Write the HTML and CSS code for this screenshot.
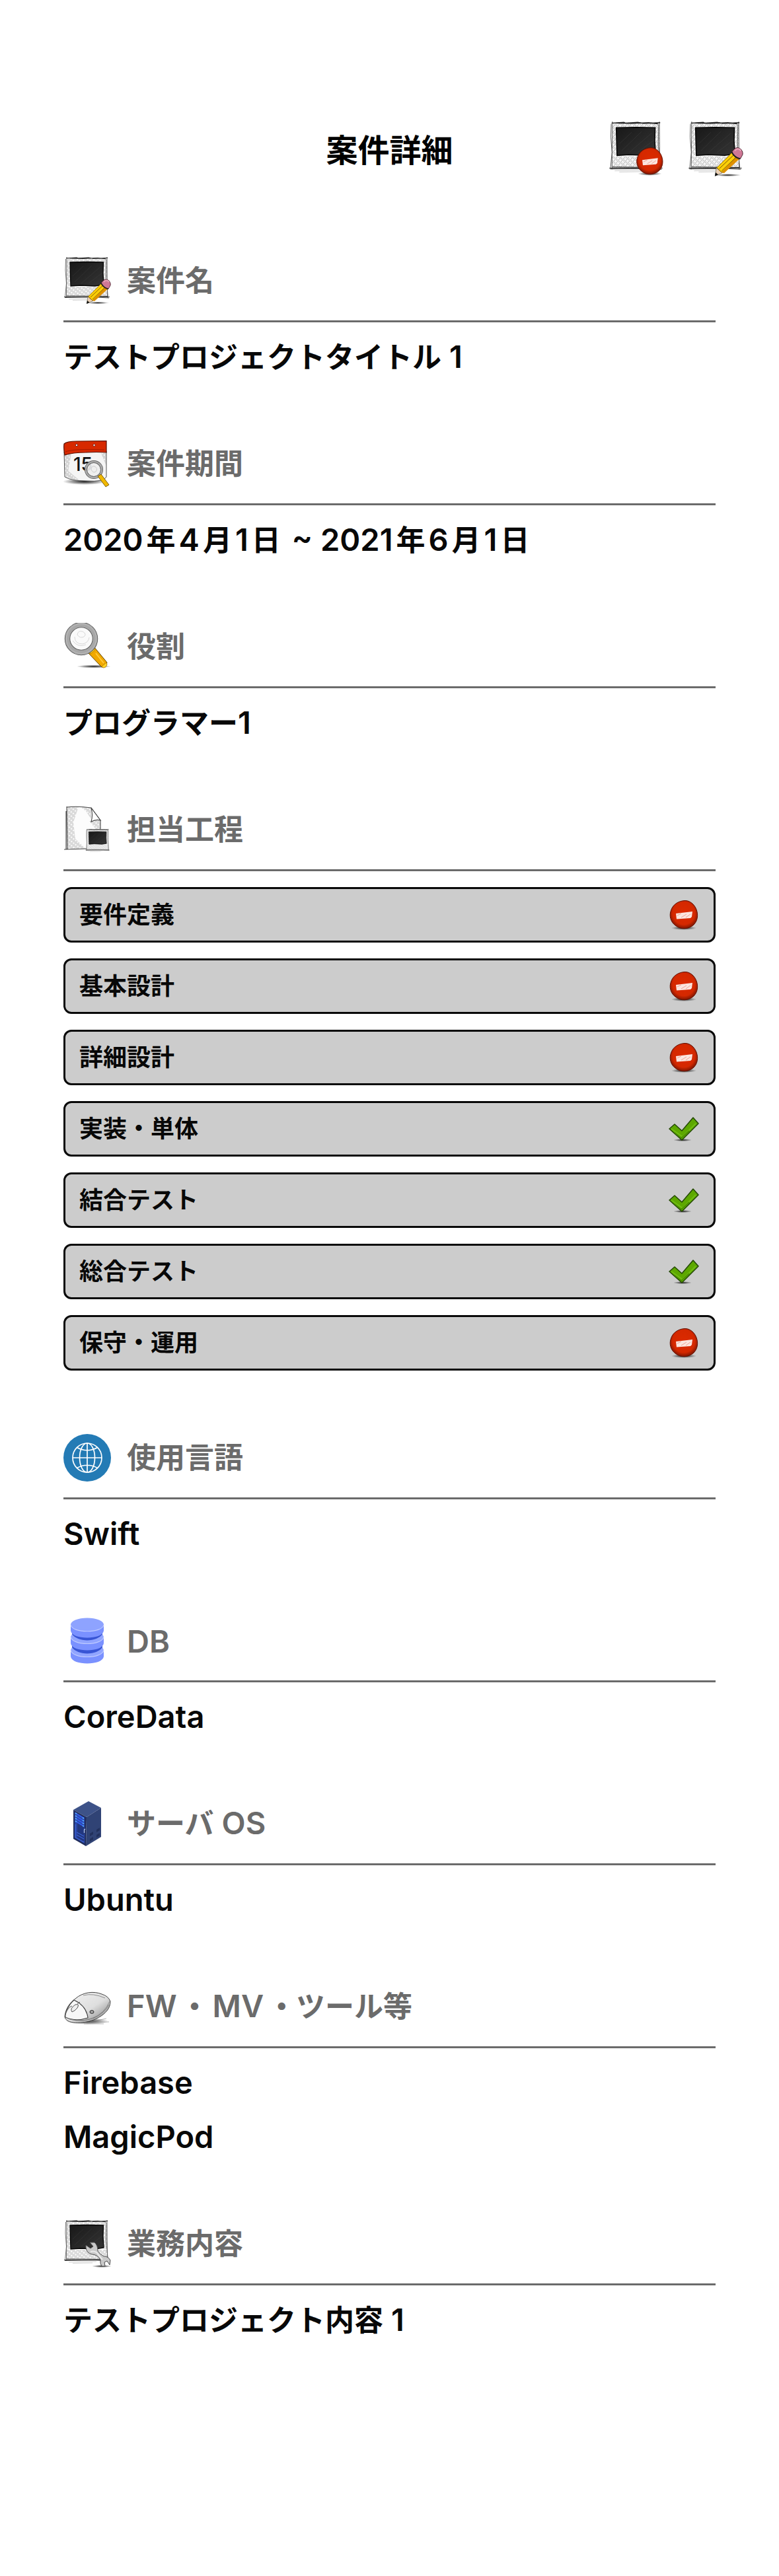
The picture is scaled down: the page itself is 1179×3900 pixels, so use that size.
FILE: index.html
```
<!DOCTYPE html>
<html lang="ja">
<head>
<meta charset="utf-8">
<meta name="viewport" content="width=device-width, initial-scale=1">
<title>案件詳細</title>
<link rel="stylesheet" href="styles.css">
</head>
<body>
<svg class="sprite" aria-hidden="true">
  <defs>
    <linearGradient id="g-screen" x1="0" y1="0" x2="1" y2="1"><stop offset="0" stop-color="#181818"/><stop offset="1" stop-color="#353535"/></linearGradient>
    <radialGradient id="g-red" cx=".5" cy=".45" r=".58"><stop offset="0" stop-color="#dc2a00"/><stop offset=".7" stop-color="#d42800"/><stop offset="1" stop-color="#6e1200"/></radialGradient>
    <radialGradient id="g-shadow"><stop offset="0" stop-color="#000" stop-opacity=".9"/><stop offset="1" stop-color="#000" stop-opacity="0"/></radialGradient>
    <linearGradient id="g-mouse" x1="0" y1="0" x2="1" y2="1"><stop offset="0" stop-color="#f4f4f4"/><stop offset=".55" stop-color="#dedede"/><stop offset="1" stop-color="#777"/></linearGradient>
    <pattern id="p-hatch" width="4" height="5" patternUnits="userSpaceOnUse" patternTransform="rotate(38)"><path d="M1 0V5M3 1V4" stroke="#666" stroke-width=".6" opacity=".8"/></pattern>
  </defs>
  <symbol id="polaroid" viewBox="0 0 72 72">
    <path d="M5 1L66 1L67 61L4 61Z" fill="#fff"/>
    <path d="M5 1H66V7H10V44H5ZM5 45H67V61H4ZM61 7H66V44H61Z" fill="url(#p-hatch)"/>
    <path d="M5 0L4.500 62M3.500 3L3 20L4.500 40L2.500 61M66 0L66.500 62M65 4L64.500 30L67.500 61" fill="none" stroke="#555" stroke-width=".8"/>
    <path d="M4 2L20 1L22 2L38 1L45 2.500L67 1.500M10 2L29 2.500L52 1.500L64 3" fill="none" stroke="#222" stroke-width="1.200"/>
    <path d="M1 60.500L30 60L70 60.500M2 61.500L50 61L69 62M5 59L67 59.500" fill="none" stroke="#333" stroke-width=".9"/>
    <path d="M8 64L50 63M14 65.500L44 65" stroke="#aaa" stroke-width=".5"/>
    <path d="M10 8L36 7.500L60.500 8L60 25L61 42L48 44L26 43L11 44L10.500 28Z" fill="url(#g-screen)" stroke="#050505" stroke-width="1.300"/>
    <path d="M17 38L43 13M27 40L56 15M38 40L59 24M14 29L30 14" stroke="#4a4a4a" stroke-width=".5" opacity=".6"/>
  </symbol>
  <symbol id="pencil" viewBox="0 0 72 72">
    <ellipse cx="52" cy="69.500" rx="17" ry="1.700" fill="url(#g-shadow)"/>
    <path d="M37 60L35.500 70.500L45 66.500Z" fill="#ead0b5" stroke="#554" stroke-width=".6"/>
    <path d="M36 66L35 71L39.500 69Z" fill="#111"/>
    <path d="M37.500 60L58 40L68 47L46.500 66.500L42 65Z" fill="#d88e00"/>
    <path d="M37.500 60L58 39.500L66 45L44 66L41 63Z" fill="#ffcf08" stroke="#5a4300" stroke-width=".6"/>
    <path d="M64 44L68 47.500L47 67L44 66Z" fill="#df9100"/>
    <path d="M41 61L61 42M44 64L64 45" stroke="#6d5000" stroke-width=".8"/>
    <path d="M57 39.500L60 36Q64 32 69 36Q73 41 70 45L68 48.500Q59 46 57 39.500Z" fill="#cf7896" stroke="#3c1722" stroke-width=".8"/>
    <path d="M57 39.500Q60 46.500 68 48.500" fill="none" stroke="#222" stroke-width="1.800"/>
    <path d="M61 38Q65 33 69 38" fill="none" stroke="#e6a3b8" stroke-width="2"/>
  </symbol>
  <symbol id="minus" viewBox="0 0 48 48">
    <ellipse cx="24" cy="44" rx="19" ry="3" fill="url(#g-shadow)"/>
    <path d="M25 2.500C33 2 40 8 43 16C46 24 45 33 39 39C32 46 19 47 11 40C4 35 1 25 5 16C8 8 16 3 25 2.500Z" fill="url(#g-red)" stroke="#641000" stroke-width="1"/>
    <path d="M12 22L37 19L36 27L34 29L13 30.500Z" fill="#fbe5df"/>
    <path d="M14 25L20 22M20 28L28 23M27 28L34 23" stroke="#e98672" stroke-width=".7"/>
  </symbol>
  <symbol id="check" viewBox="0 0 48 48">
    <ellipse cx="22" cy="41" rx="14" ry="2" fill="url(#g-shadow)"/>
    <path d="M2 24L10 17L21 27L38 7L46 16L21 41Z" fill="#5da800" stroke="#234800" stroke-width="1.500" stroke-linejoin="round"/>
    <path d="M5 24L22 36L42 16" fill="none" stroke="#70bc10" stroke-width="2"/>
    <path d="M10 30L20 38L32 27" fill="none" stroke="#478800" stroke-width="1.500"/>
  </symbol>
  <symbol id="polaroid-pencil" viewBox="0 0 72 72"><use href="#polaroid"/><use href="#pencil"/></symbol>
  <symbol id="polaroid-minus" viewBox="0 0 72 72"><use href="#polaroid"/><use href="#minus" x="34" y="32" width="39" height="39"/></symbol>
  <symbol id="magnifier" viewBox="0 0 72 72">
    <ellipse cx="46" cy="66" rx="26" ry="2.500" fill="url(#g-shadow)"/>
    <path d="M37 45L46 36L66 60Q65 67 58 67Z" fill="#f1a900" stroke="#604300" stroke-width="1"/>
    <path d="M39 43L45 38L48 41L41 47ZM58 66L65 60L66 63Q65 68 60 68Z" fill="#ffd222" stroke="#a46b00" stroke-width=".7"/>
    <path d="M49 46L61 61" stroke="#ffc83a" stroke-width="2"/>
    <circle cx="27" cy="24" r="21" fill="#fafafa" stroke="#555" stroke-width="8.500"/>
    <circle cx="27" cy="24" r="21" fill="none" stroke="#a7a7a7" stroke-width="6.800"/>
    <circle cx="27" cy="24" r="22.500" fill="none" stroke="#bdbdbd" stroke-width="1"/>
    <path d="M21 18Q22 11 29 13Q36 17 31 21Q25 24 21 18ZM17 21Q17 32 29 32Q38 30 39 22M14 27Q22 38 34 33" fill="none" stroke="#d8d8d8" stroke-width="1"/>
  </symbol>
  <symbol id="document" viewBox="0 0 72 72">
    <path d="M5 2Q24 0 42 3L56 22V66L5 65Z" fill="#fcfcfc"/>
    <path d="M5 2L23 1L15 25L18 50L34 65H5ZM25 1L42 3V20L34 8ZM39 23H56V35H49Z" fill="url(#p-hatch)"/>
    <path d="M5 1L6 66M4 8L4 66M1 66L35 65M5 2Q22 0 42 3L56 22V37" fill="none" stroke="#444" stroke-width="1.100"/>
    <path d="M42 3Q45 14 42 24Q49 20 56 22Z" fill="#fff" stroke="#444" stroke-width="1.100"/>
    <use href="#polaroid" x="33" y="35" width="38" height="38"/>
  </symbol>
  <symbol id="globe" viewBox="0 0 72 72">
    <circle cx="36" cy="36" r="36" fill="#247bb5"/>
    <g fill="none" stroke="#fff" stroke-width="1.700"><circle cx="36" cy="36" r="22"/><ellipse cx="36" cy="36" rx="11.500" ry="22"/><path d="M14 36H58M36 14V58M20.500 20.500Q36 29 51.500 20.500M20.500 51.500Q36 43 51.500 51.500"/></g>
  </symbol>
  <symbol id="database" viewBox="0 0 72 72">
    <path d="M13 23H59V52Q52 57 36 57Q20 57 13 52Z" fill="#3855d5"/>
    <g id="disk"><path d="M11 51V60C13 74 59 74 61 60V51Z" fill="#7a91ff"/><path d="M11 50C13 64 59 64 61 50L59 46C51 58 21 58 13 46Z" fill="#91a5ff"/><path d="M11 50C13 64 59 64 61 50" fill="none" stroke="#c0cbff" stroke-width="1.200"/></g>
    <path d="M13 41V45C21 59 51 59 59 45V41Z" fill="#3855d5"/>
    <use href="#disk" y="-20"/>
    <path d="M13 21V25C21 39 51 39 59 25V21Z" fill="#3855d5"/>
    <path d="M11 12V21C13 35 59 35 61 21V12Z" fill="#7a91ff"/><ellipse cx="36" cy="11.500" rx="25" ry="10" fill="#8ea3ff"/><path d="M11 12C13 25 59 25 61 12" fill="none" stroke="#c0cbff" stroke-width="1.200"/>
  </symbol>
  <symbol id="server" viewBox="0 0 72 72">
    <path d="M15 15L38 2L57 12L35 26Z" fill="#3d5288"/><path d="M35 26L57 12V56L34 70Z" fill="#304375"/><path d="M15 15L35 26L34 70L15 59Z" fill="#202d5d"/>
    <path d="M17 18L32 27V66L17 57Z" fill="#2b47a5"/><path d="M21 35L31 41V63L21 57Z" fill="#22377f"/>
    <path d="M18 20L31 28M18 24L31 32M18 28L31 36M18 32L31 40" stroke="#335dec" stroke-width="1.800"/>
    <path d="M18 20L20 21M18 24L20 25M18 28L20 29M18 32L20 33M29 27L31 28M29 31L31 32M29 35L31 36M29 39L31 40" stroke="#5cb4ff" stroke-width="1.500"/>
    <path d="M18 37V57L31 64M20 53L31 59M20 49L31 55" fill="none" stroke="#3d63d5" stroke-width="1.200"/>
    <path d="M33 44L31.500 45V50" fill="none" stroke="#bed4fa" stroke-width="1.200"/>
    <path d="M40 51L45 48V52L40 55ZM50 45L55 42V46L50 49ZM40 59L45 56V60L40 63ZM50 53L55 50V54L50 57Z" fill="#22315c"/>
  </symbol>
  <symbol id="mouse" viewBox="0 0 72 72">
    <ellipse cx="36" cy="58" rx="32" ry="5" fill="url(#g-shadow)"/>
    <path d="M2 51C3 39 10 30 18 24C29 14 46 12 58 17Q68 20 71 28C71 41 60 50 46 56C30 62 3 63 2 51Z" fill="url(#g-mouse)" stroke="#444" stroke-width="1"/>
    <path d="M16 26C6 35 2 47 3 52Q18 59 37 53Q35 35 16 26Z" fill="#f7f7f7" stroke="#444" stroke-width="1.200"/>
    <path d="M3 52Q20 61 43 54Q62 47 70 28M9 55Q29 61 48 52M45 54Q63 45 69 33M30 19Q45 15 63 23" fill="none" stroke="#777" stroke-width=".8"/>
    <path d="M13 44Q9 39 18 33Q25 31 21 38Q17 43 13 44ZM3 48Q6 37 13 35M21 32L25 29" fill="#eee" stroke="#555" stroke-width="1"/>
    <ellipse cx="43" cy="44" rx="3" ry="2.300" fill="#aaa" stroke="#222" stroke-width="1"/>
    <path d="M40 59L65 54M35 61L69 59M31 62L61 62" stroke="#888" stroke-width=".6"/>
  </symbol>
  <symbol id="polaroid-wrench" viewBox="0 0 72 72">
    <use href="#polaroid"/>
    <ellipse cx="58" cy="70" rx="15" ry="2" fill="url(#g-shadow)"/>
    <path d="M40 34L47 34Q52 38 52 47Q54 51 61 55Q68 55 71 61L70 68L66 62L62 64L63 70L58 70Q55 66 56 60Q51 52 43 52Q35 50 34 42L34 38L41 43L45 40Z" fill="#c9c9c9" stroke="#4d4d4d" stroke-width="1"/>
    <path d="M41 48Q50 46 53 53L59 60" fill="none" stroke="#e9e9e9" stroke-width="2"/>
  </symbol>
</svg>

<header class="topbar">
  <h1 class="topbar-title">案件詳細</h1>
  <div class="topbar-actions">
    <button class="icon-button" type="button" aria-label="削除"><svg class="icon-action"><use href="#polaroid-minus"/></svg></button>
    <button class="icon-button" type="button" aria-label="編集"><svg class="icon-action"><use href="#polaroid-pencil"/></svg></button>
  </div>
</header>

<main class="details">
  <section class="section">
    <h2 class="section-title"><svg class="icon"><use href="#polaroid-pencil"/></svg>案件名</h2>
    <p class="value mixed">テストプロジェクトタイトル<span class="latin">1</span></p>
  </section>
  <section class="section">
    <h2 class="section-title">
      <svg class="icon" viewBox="0 0 72 72" aria-hidden="true">
        <ellipse cx="32" cy="63" rx="33" ry="5" fill="url(#g-shadow)"/>
        <path d="M1 18L65 17L65 56Q62 64 34 62Q12 62 2 56Z" fill="#f5f5f5" stroke="#555" stroke-width="1"/>
        <path d="M1 20L12 20L6 54L2 56ZM5 45L24 61L4 57ZM57 20L65 20V40Z" fill="url(#p-hatch)"/>
        <path d="M1 6Q5 2 20 2L65 1.500L65 19Q50 18 34 19Q14 19 2 23Q0 13 1 6Z" fill="#d72900" stroke="#551000" stroke-width="1.200"/>
        <path d="M3 18Q16 13 62 15" fill="none" stroke="#a51b00" stroke-width="1"/>
        <circle cx="20" cy="8" r="1.700" fill="#eee" stroke="#500" stroke-width=".7"/><circle cx="46.500" cy="8" r="1.700" fill="#eee" stroke="#500" stroke-width=".7"/>
        <text class="calendar-day" x="15" y="47">15</text>
        <circle cx="46" cy="45" r="12" fill="#eee" fill-opacity=".92" stroke="#555" stroke-width="4"/>
        <circle cx="46" cy="45" r="12" fill="none" stroke="#aaa" stroke-width="2.600"/>
        <path d="M42 45Q42 39 47 40Q53 43 49 48Q45 51 42 45Z" fill="none" stroke="#ccc" stroke-width="1"/>
        <path d="M52 55L57 52L69 68L64 71Z" fill="#f0b800" stroke="#614600" stroke-width=".8"/>
      </svg>案件期間</h2>
    <p class="value mixed-date"><span class="latin">2020</span>年<span class="latin">4</span>月<span class="latin">1</span>日<span class="latin"> ~ 2021</span>年<span class="latin">6</span>月<span class="latin">1</span>日</p>
  </section>
  <section class="section">
    <h2 class="section-title"><svg class="icon"><use href="#magnifier"/></svg>役割</h2>
    <p class="value">プログラマー<span class="latin">1</span></p>
  </section>
  <section class="section">
    <h2 class="section-title"><svg class="icon"><use href="#document"/></svg>担当工程</h2>
    <ul class="phases">
      <li class="phase">要件定義<svg class="icon-state" role="img" aria-label="対象外"><use href="#minus"/></svg></li>
      <li class="phase">基本設計<svg class="icon-state" role="img" aria-label="対象外"><use href="#minus"/></svg></li>
      <li class="phase">詳細設計<svg class="icon-state" role="img" aria-label="対象外"><use href="#minus"/></svg></li>
      <li class="phase">実装・単体<svg class="icon-state" role="img" aria-label="担当"><use href="#check"/></svg></li>
      <li class="phase">結合テスト<svg class="icon-state" role="img" aria-label="担当"><use href="#check"/></svg></li>
      <li class="phase">総合テスト<svg class="icon-state" role="img" aria-label="担当"><use href="#check"/></svg></li>
      <li class="phase">保守・運用<svg class="icon-state" role="img" aria-label="対象外"><use href="#minus"/></svg></li>
    </ul>
  </section>
  <section class="section">
    <h2 class="section-title"><svg class="icon"><use href="#globe"/></svg>使用言語</h2>
    <p class="value"><span class="latin">Swift</span></p>
  </section>
  <section class="section">
    <h2 class="section-title"><svg class="icon"><use href="#database"/></svg><span class="latin">DB</span></h2>
    <p class="value"><span class="latin">CoreData</span></p>
  </section>
  <section class="section">
    <h2 class="section-title"><svg class="icon"><use href="#server"/></svg><span class="mixed">サーバ<span class="latin">OS</span></span></h2>
    <p class="value"><span class="latin">Ubuntu</span></p>
  </section>
  <section class="section">
    <h2 class="section-title"><svg class="icon"><use href="#mouse"/></svg><span class="mixed-date"><span class="latin">FW</span>・<span class="latin">MV</span>・ツール等</span></h2>
    <p class="value"><span class="latin">Firebase</span></p>
    <p class="value"><span class="latin">MagicPod</span></p>
  </section>
  <section class="section">
    <h2 class="section-title"><svg class="icon"><use href="#polaroid-wrench"/></svg>業務内容</h2>
    <p class="value mixed">テストプロジェクト内容<span class="latin">1</span></p>
  </section>
</main>
</body>
</html>
```
FILE: styles.css
```
* { box-sizing: border-box; }

body {
  margin: 0;
  background: #fff;
  color: #080808;
  font-family: Inter, "Noto Sans CJK JP", sans-serif;
  font-size: 44px;
  font-weight: 600;
  line-height: 58px;
}

h1, h2, p, ul { margin: 0; padding: 0; font-size: inherit; font-weight: inherit; }

.sprite { position: absolute; width: 0; height: 0; }
.calendar-day { font: 500 28px Inter, sans-serif; fill: #111; }

.topbar {
  display: grid;
  grid-template-columns: 1fr auto 1fr;
  align-items: center;
  padding: 184px 54px 0;
}
.topbar-title { grid-column: 2; padding-top: 4px; color: #000; font-size: 48px; }
.topbar-actions { display: flex; justify-content: flex-end; gap: 36px; }
.icon-button { display: block; padding: 0; border: 0; background: none; cursor: pointer; }
.icon-action { display: block; width: 84px; height: 84px; }

.details {
  display: flex;
  flex-direction: column;
  gap: 96px;
  padding: 121px 96px;
}
.section { display: flex; flex-direction: column; gap: 24px; }
.section-title {
  display: flex;
  align-items: center;
  gap: 24px;
  padding-bottom: 24px;
  border-bottom: 3px solid #6b6b6b;
  color: #6b6b6b;
}
.icon { flex: none; width: 72px; height: 72px; }

/* Latin runs are set larger than the kana and kanji beside them */
.latin { font-size: 47px; line-height: 1; }
.mixed .latin { margin-left: 12px; }
.mixed-date .latin { margin: 0 5px; }
.mixed-date .latin:first-child { margin-left: 0; }

.phases { display: flex; flex-direction: column; gap: 24px; list-style: none; }
.phase {
  display: flex;
  align-items: center;
  justify-content: space-between;
  height: 84px;
  padding: 0 21px;
  border: 3px solid #080808;
  border-radius: 12px;
  background: #ccc;
  font-size: 36px;
}
.icon-state { width: 48px; height: 48px; }
```
